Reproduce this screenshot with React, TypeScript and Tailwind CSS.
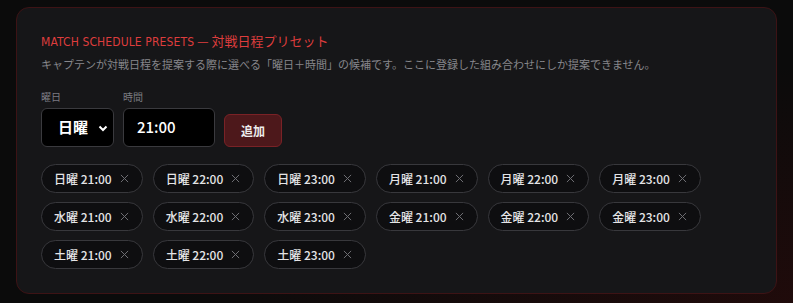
import { useState } from 'react'

const days = ['日曜', '月曜', '水曜', '金曜', '土曜']
const initial = [
  '日曜 21:00', '日曜 22:00', '日曜 23:00', '月曜 21:00', '月曜 22:00', '月曜 23:00',
  '水曜 21:00', '水曜 22:00', '水曜 23:00', '金曜 21:00', '金曜 22:00', '金曜 23:00',
  '土曜 21:00', '土曜 22:00', '土曜 23:00',
]

function Chip({ label, onRemove }: { label: string; onRemove: () => void }) {
  return (
    <span className="flex h-[29px] items-center gap-[8px] rounded-full border border-[#38383c] bg-[#0e0e10] pl-[12px] pr-[13px] text-[12px] font-medium text-[#e4e4e6]">
      {label}
      <button onClick={onRemove} className="text-[#6f6f74]">
        <svg width="9" height="9" viewBox="0 0 10 10" fill="none" stroke="currentColor" strokeWidth="1.1">
          <path d="M1 1l8 8M9 1l-8 8" />
        </svg>
      </button>
    </span>
  )
}

export default function App() {
  const [presets, setPresets] = useState(initial)
  const [day] = useState(days[0])

  return (
    <div
      className="min-h-[303px] bg-[#0b0b0b] px-4 pb-[8px] pt-[7px] [font-family:'Noto_Sans_CJK_JP','Noto_Sans',sans-serif]"
      style={{ backgroundImage: 'radial-gradient(ellipse at 100% 100%, rgba(70,10,10,0.35), transparent 55%)' }}
    >
      <section className="rounded-[13px] border border-[#3d1315] bg-[#161618] px-6 pb-6 pt-[23px]">
        <h2 className="text-[13px] leading-5 text-[#de3d3d]">
          <span className="text-[12px] tracking-[0.01em] [font-family:'DejaVu_Sans_Condensed',sans-serif]">
            MATCH SCHEDULE PRESETS
          </span>{' '}
          — 対戦日程プリセット
        </h2>
        <p className="mt-[4px] text-[11px] leading-4 text-[#86868b]">
          キャプテンが対戦日程を提案する際に選べる「曜日＋時間」の候補です。ここに登録した組み合わせにしか提案できません。
        </p>

        <div className="mt-[18px] flex items-end gap-[9px]">
          <label className="flex flex-col gap-1">
            <span className="text-[10px] leading-[14px] text-[#7c7c82]">曜日</span>
            <div className="flex h-[39px] w-[73px] items-center justify-between rounded-md border border-[#3a3a3e] bg-black pl-[16px] pr-[5px] text-[15px] font-semibold text-white">
              {day}
              <svg width="10" height="10" viewBox="0 0 10 10" fill="none" stroke="currentColor" strokeWidth="2">
                <path d="M1.5 3.5L5 7l3.5-3.5" />
              </svg>
            </div>
          </label>
          <label className="flex flex-col gap-1">
            <span className="text-[10px] leading-[14px] text-[#7c7c82]">時間</span>
            <div className="flex h-[39px] w-[92px] items-center rounded-md border border-[#3a3a3e] bg-black pl-[13px] text-[15px] font-medium text-white">
              21:00
            </div>
          </label>
          <button className="h-[33px] w-[58px] rounded-md border border-[#7a2226] bg-[#4d181b] text-[12px] font-bold text-[#ececec]">
            追加
          </button>
        </div>

        <div className="mt-[17px] flex flex-wrap gap-x-[10px] gap-y-[9px]">
          {presets.map(p => (
            <Chip key={p} label={p} onRemove={() => setPresets(presets.filter(x => x !== p))} />
          ))}
        </div>
      </section>
    </div>
  )
}
